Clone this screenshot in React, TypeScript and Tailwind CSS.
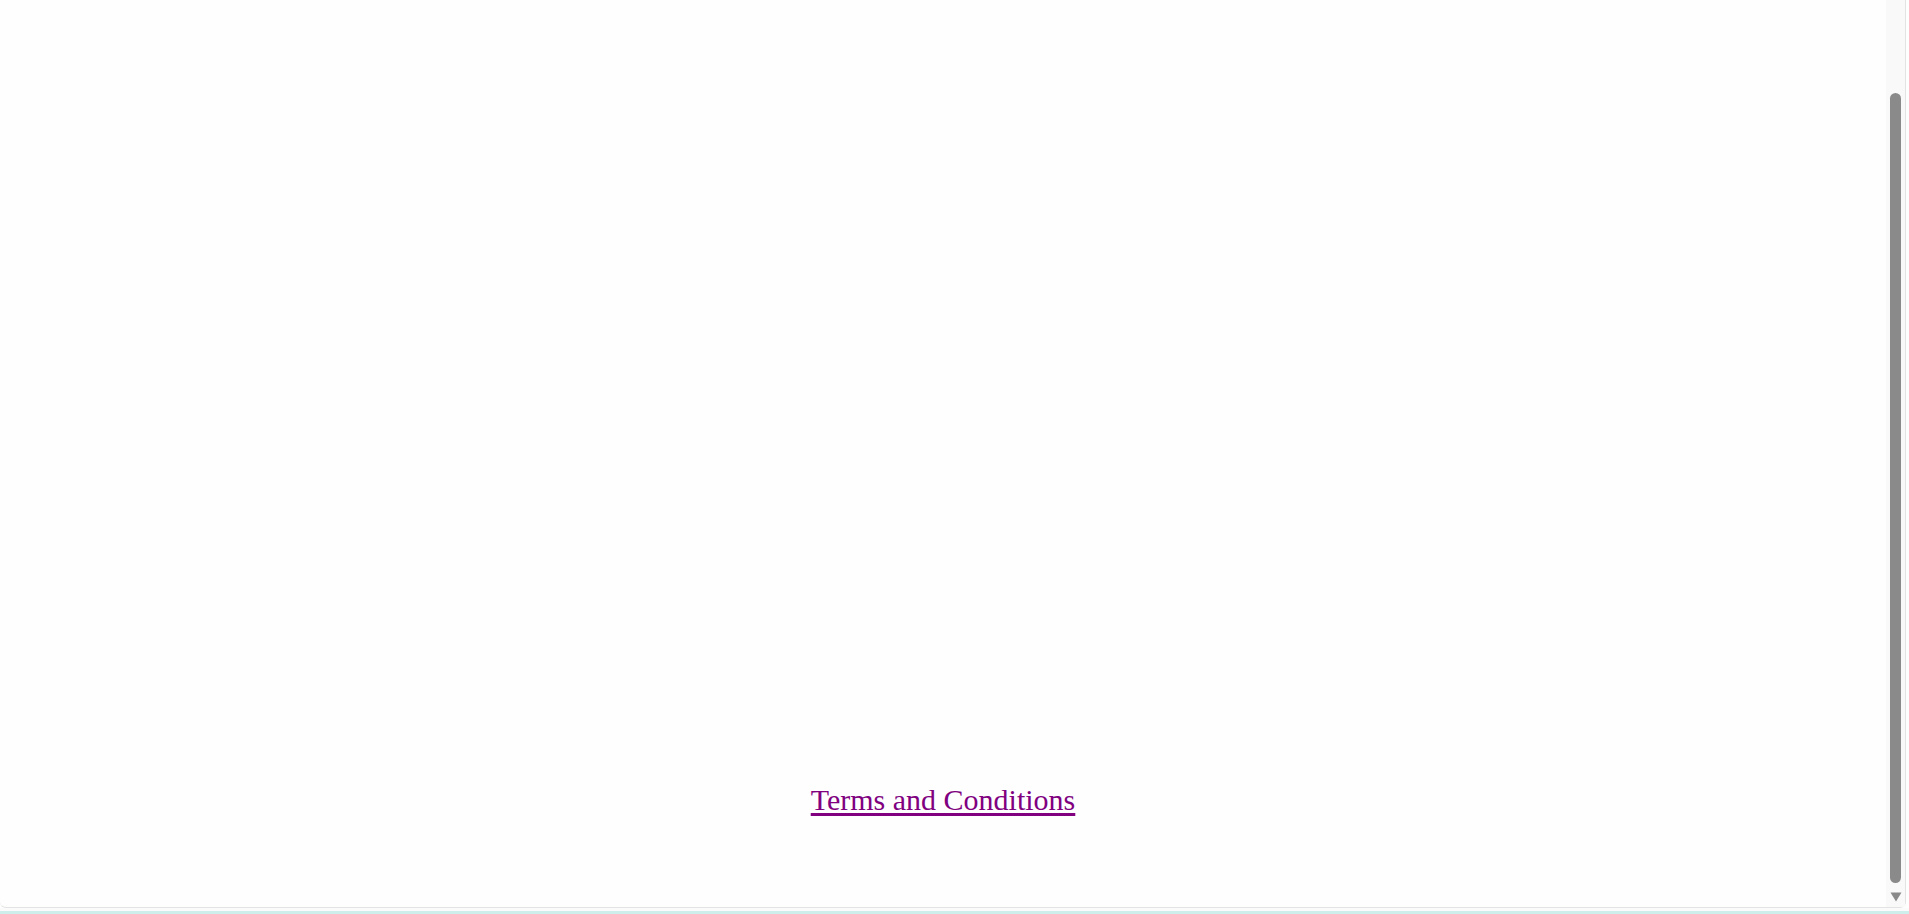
const App = () =>
  <div className="h-[914px] w-[1909px] overflow-hidden bg-[#fefefe] flex flex-col">
    <div className="flex-1 flex flex-row border-b border-r border-[#e3e3e3] rounded-b-[6px] mr-[3px] min-h-0">
      <main className="flex-1 flex flex-col items-center pt-[783px]">
        <a
          href="#terms"
          className="text-[30px] leading-[1.15] text-[#800080] underline decoration-[3px] underline-offset-[3px]"
          style={{ fontFamily: '"Liberation Serif", "Times New Roman", serif' }}
        >
          Terms and Conditions
        </a>
      </main>
      <div className="w-[19px] bg-[#f9f9f9] flex flex-col items-center pt-[93px] pb-[3px]">
        <div className="w-[11px] h-[790px] rounded-full bg-[#8a8a8a]"></div>
        <svg className="mt-[9px]" width="12" height="10" viewBox="0 0 12 10">
          <path d="M0.5 0.5 H11.5 L6 9.5 Z" fill="#8a8a8a" />
        </svg>
      </div>
    </div>
    <div className="h-[3px] bg-[#fbfbfb]"></div>
    <div className="h-[3px] bg-[#cdeeea]"></div>
  </div>
export default App;
